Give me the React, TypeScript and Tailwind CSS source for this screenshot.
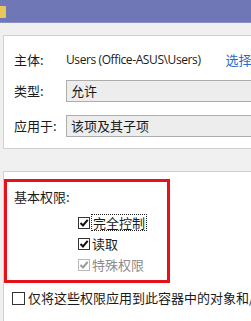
import React from "react";

const font = { fontFamily: '"Noto Sans CJK SC", "Open Sans", sans-serif' };

function Check({ checked, disabled }: { checked?: boolean; disabled?: boolean }) {
  return (
    <div
      className={`w-[12px] h-[12px] shrink-0 border ${disabled ? "border-[#b8b8b8]" : "border-[#333]"} bg-white flex items-center justify-center`}
    >
      {checked && (
        <svg width="10" height="10" viewBox="0 0 10 10">
          <path
            d="M1.5 5 L4 7.5 L8.7 1.8"
            fill="none"
            stroke={disabled ? "#9a9a9a" : "#111"}
            strokeWidth="2"
          />
        </svg>
      )}
    </div>
  );
}

export default function App() {
  return (
    <div className="w-[251px] h-[321px] overflow-hidden bg-[#f0f0f0] text-[13px] text-[#1a1a1a]" style={font}>
      {/* title bar */}
      <div className="h-[23px] bg-[#6f77b7] flex items-center border-b border-[#8990c4]">
        <div className="w-[6px] h-[12px] bg-[#e8c75a] rounded-r-[1px] mt-[1px]" />
      </div>
      {/* panel 1 */}
      <div className="mt-[12px] ml-[3px] h-[114px] bg-white border-l border-t border-b border-[#d0d0d0] pl-[10px] pt-[13px] flex flex-col">
        <div className="h-[22px] flex items-center whitespace-nowrap">
          <span className="w-[52px] shrink-0">主体:</span>
          <span className="text-[12px] tracking-[-0.4px] shrink-0" style={{ fontFamily: '"Open Sans", sans-serif' }}>
            Users (Office-ASUS\Users)
          </span>
          <span className="ml-[25px] text-[#2a6ad2] shrink-0">选择主体</span>
        </div>
        <div className="h-[22px] mt-[9px] flex items-center">
          <span className="w-[52px] shrink-0">类型:</span>
          <div className="h-[22px] flex-1 bg-[#ededed] border border-[#adadad] border-r-0 pl-[4px] flex items-center">
            允许
          </div>
        </div>
        <div className="h-[22px] mt-[13px] flex items-center">
          <span className="w-[52px] shrink-0">应用于:</span>
          <div className="h-[22px] flex-1 bg-[#ededed] border border-[#adadad] border-r-0 pl-[4px] flex items-center">
            该项及其子项
          </div>
        </div>
      </div>
      {/* panel 2 */}
      <div className="mt-[22px] ml-[3px] h-[160px] bg-white border-l border-t border-[#d0d0d0] pt-[7px]">
        <div className="w-[166px] h-[104px] border-[3px] border-[#e8101a] pl-[7px] pt-[6px]">
          <div className="h-[18px] flex items-center">基本权限:</div>
          <div className="ml-[64px] mt-[10px] flex flex-col gap-[8px]">
            <div className="flex items-center h-[13px]">
              <Check checked />
              <span className="ml-[1px] px-[1px] border border-dotted border-[#222] leading-[15px]">完全控制</span>
            </div>
            <div className="flex items-center h-[13px]">
              <Check checked />
              <span className="ml-[2px]">读取</span>
            </div>
            <div className="flex items-center h-[13px] text-[#8c8c8c]">
              <Check checked disabled />
              <span className="ml-[2px]">特殊权限</span>
            </div>
          </div>
        </div>
        <div className="mt-[8px] ml-[8px] flex items-center h-[14px] whitespace-nowrap">
          <div className="w-[13px] h-[13px] border border-[#333] bg-white shrink-0" />
          <span className="ml-[3px]">仅将这些权限应用到此容器中的对象和/或容器</span>
        </div>
      </div>
    </div>
  );
}
